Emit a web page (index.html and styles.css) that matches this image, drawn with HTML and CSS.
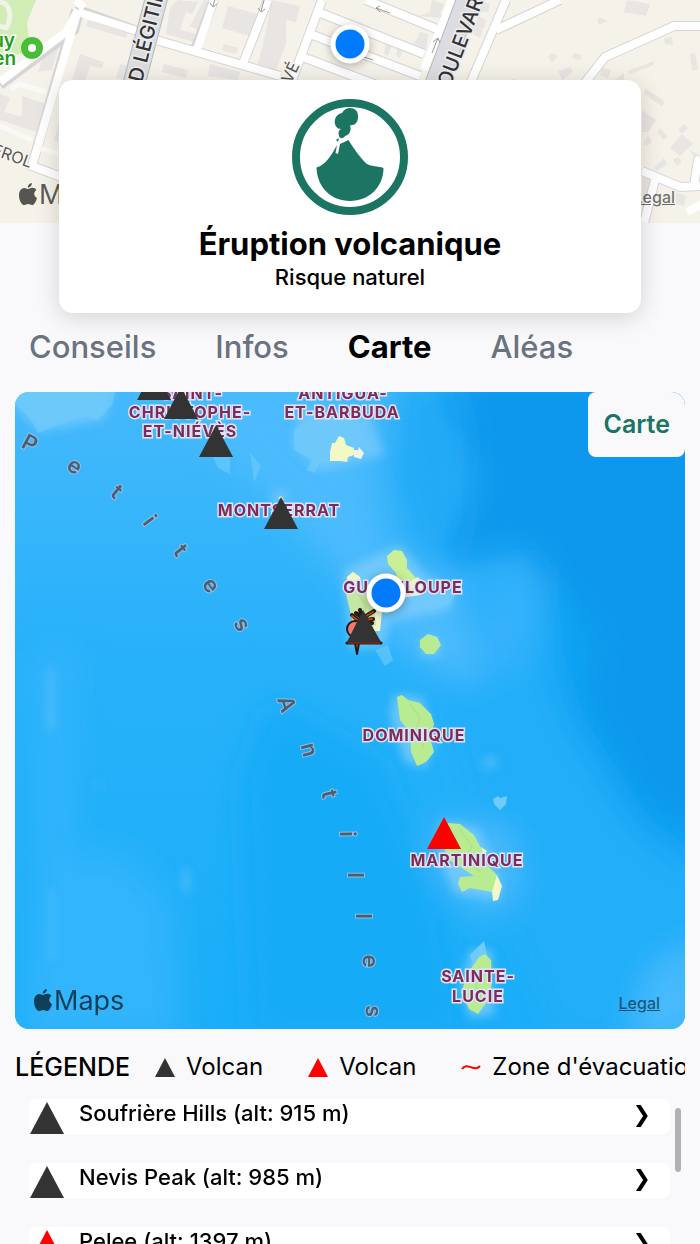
FILE: index.html
```html
<!DOCTYPE html>
<html lang="fr">
<head>
  <meta charset="UTF-8" />
  <meta name="viewport" content="width=device-width, initial-scale=1.0"/>
  <title>Éruption volcanique</title>
  <link rel="stylesheet" href="styles.css">
</head>
<body>

<svg class="defs" width="0" height="0">
  <symbol id="triangle" viewBox="0 0 34 32"><path d="M17 0L34 32H0z" fill="currentColor"/></symbol>
  <symbol id="apple" viewBox="0 0 18 22">
    <path d="M12.800 0c.3 2.500-1.700 4.700-4 4.700C8.600 2.400 10.500.3 12.800 0zM9.200 6c1.100 0 2.300-1.200 4.300-1.200 1.500 0 3.100.8 4 2.200-3.300 2-2.800 6.500.5 7.900C17 18.600 15.200 22 13.100 22c-1.500 0-2-.9-3.900-.9S6.800 22 5.300 22C2.500 22 0 17 0 12.400 0 7.800 2.400 4.900 5.300 4.900 7 4.900 8.200 6 9.200 6z" fill="currentColor"/>
  </symbol>
</svg>

<div class="app">
  <header class="top-map">
    <svg class="map-art" viewBox="0 0 700 223" preserveAspectRatio="xMidYMid slice">
      <rect width="700" height="223" fill="#f5f2e9"/>
      <path d="M0 0H36L27 22 30 52 0 58z" fill="#d1ecb5"/>
      <path d="M0 2C14 4 10 24 6 28L0 26" fill="none" stroke="#f0f3e6" stroke-width="5"/>

      <!-- buildings -->
      <g fill="#e8e5e2">
        <path d="M88 20L128 30 126 38 86 26zM80 54L104 62 102 68 90 66 84 84 72 80zM120 64L128 66 124 80 116 78zM164 64L188 70 186 78 162 72zM210 64L240 72 238 80 208 76z"/>
        <path d="M46 50L60 42 52 70 38 72zM0 94L10 98 4 112 26 118 24 128 0 120zM22 96L46 104 36 132 18 126 22 114z"/>
        <path d="M170 8L178 0 198 2 192 14 186 12 180 30 196 34 194 42 166 34zM204 0L212 2 198 30 190 26zM228 6L258 14 250 36 222 28z"/>
        <path d="M272 0L300 6 296 22 286 20 286 44 276 70 258 64 264 40zM224 44L238 48 236 54 222 50zM418 16L430 12 432 0 444 4 440 14 484 24 480 38 466 30 468 20zM420 32L428 34 426 50 414 44zM398 44L404 46 400 58 396 56zM386 42L392 44 388 56 384 54zM480 0L490 4 488 12 480 12zM478 16L486 20 484 28 476 26z"/>
        <path d="M627 0L650 4 646 16 624 12zM598 17L608 21 598 25zM548 57L552 53 558 56 552 62zM574 53L582 55 580 60 572 58zM558 71L570 67 573 72 562 80zM602 68L611 70 608 78 600 75zM628 71L654 61 654 65 630 74zM664 38L672 37 673 45 665 44zM690 54L695 53 698 69 692 71zM614 80L624 73 624 80z"/>
        <path d="M645 88L665 102 662 106 644 94zM642 110L656 120 648 132 642 132zM660 128L667 136 664 140 657 132zM670 148L682 134 693 144 680 156zM678 130L684 124 688 128 682 134zM644 142L648 136 652 142 646 146zM654 168L664 158 667 164 657 171zM673 160L678 157 682 162 677 166zM690 150L700 156 696 160zM642 176L656 181 648 214 642 206zM676 192L686 196 684 206 676 204z"/>
        <path d="M60 120L58 142 54 140zM56 186L60 180V192zM510 80L514 78 516 80z"/>
      </g>

      <!-- roads -->
      <g fill="none" stroke="#d6d5d5" stroke-width="10">
        <path d="M80 8L74 30 0 85M76 10L32 166 64 178M78 10L140 32M156 40L280 76M214 0L194 52M268 0L242 66M322 0L292 80M366 0L444 32M318 12L424 54M310 34L420 76M300 56L390 90M506 0L470 84M560 0L496 30M700 26L674 26 605 57 584 84M642 171L680 187 700 186M655 180L644 223M694 186L698 160 700 158"/>
      </g>
      <g fill="none" stroke="#fff" stroke-width="8">
        <path d="M76 0L84 8M78 10L66 32 0 82M78 10L32 166 64 178M78 12L140 32M156 40L280 76M214 0L196 52M268 0L242 66M322 0L292 80M366 0L444 32M318 12L424 54M310 34L420 76M300 56L390 90M452 0L424 70M506 0L470 84M560 0L496 30M700 26L674 26 605 57 584 84M642 171L680 187 700 186M655 180L644 223M694 186L698 160 700 158M687 212L702 204"/>
        <path d="M10 90L20 84 46 92M0 126L32 140M38 148L60 154" stroke-width="5" stroke="#faf9f6"/>
      </g>
      <path d="M157 -4L134 84M469 -4L436 84" fill="none" stroke="#b9bac0" stroke-width="23"/>
      <path d="M157 -4L134 84M469 -4L436 84" fill="none" stroke="#dcdde1" stroke-width="21"/>
      <g fill="none" stroke="#999" stroke-width="1">
        <path d="M217 -8L213 6M210 3L213 7 217 4M265 -3L261 11M258 8L261 12 265 9M390 13L376 8M380 6L376 8 380 12M432 53L438 38M433 42L438 38 440 43M373 60L364 57"/>
      </g>

      <g class="street">
        <text x="-9" y="154" transform="rotate(20 -9 154)">EROL</text>
        <text x="291" y="84" transform="rotate(-65 291 84)">VÉ</text>
        <text class="avenue" x="142" y="83" transform="rotate(-76 142 83)">D LÉGITIM</text>
        <text class="avenue" x="450" y="88" transform="rotate(-69 450 88)">OULEVARD</text>
      </g>
      <g class="park" text-anchor="end">
        <text x="15" y="47">uy</text>
        <text x="16" y="65">en</text>
      </g>
      <circle cx="32" cy="48" r="7.500" fill="#fff" stroke="#49bd37" stroke-width="7"/>
      <circle class="position" cx="350" cy="44" r="17"/>
    </svg>
    <div class="map-brand"><svg class="brand-icon"><use href="#apple"/></svg>Maps</div>
    <a class="legal" href="#">Legal</a>
  </header>

  <section class="risk-card">
    <svg class="risk-icon" viewBox="0 0 116 116">
      <circle cx="58" cy="58" r="54" fill="none" stroke="#1c7463" stroke-width="8"/>
      <path d="M24.500 68.500C34 66 40 55 45 46L43.500 54 46 55 48 45 56.500 41C62 50 70 61 75 65C79 67.500 86 67 91.500 69C91.500 88 77 102 58 102S25 88 24.500 68.500z" fill="#1c7463"/>
      <path d="M46 43L44 41 47 39M47 37C46 33 47 31 49 30C41 30 40 16 50 14C54 6 67 8 66 18C66 24 62 27 58 26C60 32 57 36 53 37C51 40 48 40 47 37z" fill="#1c7463"/>
    </svg>
    <h1>Éruption volcanique</h1>
    <p>Risque naturel</p>
  </section>

  <nav class="tabs">
    <button>Conseils</button>
    <button>Infos</button>
    <button class="active">Carte</button>
    <button>Aléas</button>
  </nav>

  <main>
    <div class="big-map">
      <svg class="map-art" viewBox="15 392 670 637" preserveAspectRatio="xMidYMid slice">
        <defs>
          <linearGradient id="sea" x1="0" y1="0" x2="0" y2="1">
            <stop offset="0" stop-color="#45b9fb"/>
            <stop offset=".4" stop-color="#28b1fa"/>
            <stop offset="1" stop-color="#1baef9"/>
          </linearGradient>
          <filter id="haze" x="-50%" y="-50%" width="200%" height="200%"><feGaussianBlur stdDeviation="16"/></filter>
          <filter id="shore" x="-50%" y="-50%" width="200%" height="200%"><feGaussianBlur stdDeviation="5"/></filter>
        </defs>
        <rect x="15" y="392" width="670" height="637" fill="url(#sea)"/>

        <!-- deep and shallow water -->
        <g filter="url(#haze)">
          <path d="M400 370L470 380 460 570 420 560 390 480z" fill="#20aaf7"/>
          <path d="M450 370H720V850L640 800 580 720 550 600 530 550 450 565 475 480z" fill="#0c98ed"/>
          <path d="M545 560L600 640 585 700 640 800 700 840V900L600 860 560 760z" fill="#0ca1f2"/>
          <path d="M270 700L240 780 250 1040 470 1040 440 900 380 760z" fill="#17abf7"/>
          <path d="M480 575L535 560 545 640 570 720 640 830 700 870V1040H560L480 850 430 660z" fill="#22aef9"/>
          <path d="M490 580L535 565 535 640 510 680 470 660z" fill="#36b2fb"/>
          <path d="M160 390L360 390 380 540 460 590 480 690 400 650 330 560z" fill="#4bbbfd"/>
          <path d="M40 860L120 850 170 900 180 1040 20 1040z" fill="#30b5fb"/>
          <path d="M40 650L70 650 70 860 40 860z" fill="#34b6fc"/>
          <path d="M440 820L510 830 520 890 480 920 430 860z" fill="#4bbbfd"/>
          <path d="M650 970L700 940V1040H630z" fill="#4abbfd"/>
        </g>
        <path d="M446 392L450 418 476 430 470 500 452 550 458 560 530 548 545 570" fill="none" stroke="#0798ed" stroke-width="6" opacity=".3" filter="url(#shore)"/>
        <g filter="url(#shore)" fill="#7accfb">
          <path d="M12 385H115L105 420 40 432 18 412zM300 410L370 415 385 455 320 472 292 445z" opacity=".7"/>
          <path d="M343 570L400 545 425 575 455 590 450 610 390 622 385 645 350 650zM420 638H440V656H420zM394 694L422 697 436 740 425 768 405 762 390 715zM440 820L478 828 500 880 500 900 455 894 440 860zM470 950L492 950 494 1015 470 1018 460 990z" opacity=".8"/>
          <path d="M48 670L52 668 53 725 48 735zM50 890L53 888V960H50zM182 870L188 868 190 895 184 890zM94 785L100 782 100 790zM272 490H288V510H272zM490 755L500 765 480 768z" opacity=".6"/>
        </g>
        <g fill="#6fcbfa">
          <path d="M15 392H115L112 405 98 420 84 417 66 422 50 428 38 433 34 425 26 414 16 406zM294 430L310 418 355 410 362 440 350 462 320 462 315 473 306 470 312 460 294 450z" opacity=".7"/>
          <path d="M213 457H230V474L218 468zM250 452L261 466 254 482 252 465zM415 606L460 588 450 604 430 611zM375 650L388 645 393 660 385 666z" opacity=".6"/>
          <path d="M493 799L498 796 500 798 507 796 506 804 500 810 494 804zM470 955L484 941 488 960 474 970z"/>
        </g>

        <!-- islands -->
        <path d="M330 452L332 443 335 443 339 436 344 438 346 445 354 448 354 455 348 457 347 462 340 461 330 461z" fill="#f1fac5"/>
        <path d="M354 450H358L359 447 364 453 361 459 354 457z" fill="#f3f3e8"/>
        <path d="M387 556L394 550 402 551 407 560 407 568 416 578 414 590 405 598 398 584 396 573 388 564z" fill="#c9f096"/>
        <path d="M392 578L405 584 418 577 424 584 420 595 400 598zM372 603L382 612 380 631 370 631z" fill="#f0f3cb"/>
        <path d="M347 577L353 572 360 577 362 590 373 600 376 625 363 632 352 619 346 594z" fill="#c6e6a6"/>
        <path d="M347 577L353 572 360 577 362 588 348 594z" fill="#eef8c4"/>
        <path d="M420 640L428 634 437 637 441 645 434 654 426 654 420 647z" fill="#b9ec92"/>
        <path d="M397 697L402 695 408 700 420 703 431 714 434 724 430 738 434 752 426 762 417 766 411 752 410 732 400 720z" fill="#b9ec92"/>
        <path d="M448 823L460 824 474 835 482 850 486 864 497 875 498 888 492 892 470 888 462 892 458 884 460 877 474 876 462 868 446 858 444 838z" fill="#b9ec92"/>
        <path d="M481 847L487 851 484 856zM497 875L502 886 498 900 493 901 492 892zM190 400L192 405 189 405zM278 498L281 496 284 500z" fill="#f1fac5"/>
        <path d="M479 957L485 954 491 960 492 980 490 998 478 1014 469 1009 461 992 470 970z" fill="#b9ec92"/>
        <path d="M410 704L420 718 416 732 424 748M460 830L472 846 466 856 480 872M356 590L366 606 362 620M480 966L476 986 482 1000" fill="none" stroke="#a3da81" stroke-width="2" opacity=".4"/>

        <g class="country" text-anchor="middle">
          <text x="192" y="399">SAINT-</text>
          <text x="190" y="418">CHRISTOPHE-</text>
          <text x="190" y="437">ET-NIÉVÈS</text>
          <text x="343" y="399">ANTIGUA-</text>
          <text x="342" y="418">ET-BARBUDA</text>
          <text x="279" y="516">MONTSERRAT</text>
          <text x="403" y="593">GUADELOUPE</text>
          <text x="414" y="741">DOMINIQUE</text>
          <text x="467" y="866">MARTINIQUE</text>
          <text x="478" y="982">SAINTE-</text>
          <text x="478" y="1002">LUCIE</text>
        </g>

        <!-- Petites Antilles, one letter at a time along the arc -->
        <g class="sea-name" text-anchor="middle">
          <text transform="translate(30 443) rotate(28)" y="8">P</text>
          <text transform="translate(74 467) rotate(33)" y="6">e</text>
          <text transform="translate(117 491) rotate(40)" y="8">t</text>
          <text transform="translate(150 520) rotate(53)" y="8">i</text>
          <text transform="translate(181 550) rotate(52)" y="8">t</text>
          <text transform="translate(210 586) rotate(54)" y="6">e</text>
          <text transform="translate(241 625) rotate(60)" y="6">s</text>
          <text transform="translate(287 704) rotate(72)" y="8">A</text>
          <text transform="translate(308 750) rotate(76)" y="6">n</text>
          <text transform="translate(330 794) rotate(78)" y="8">t</text>
          <text transform="translate(348 834) rotate(89)" y="8">i</text>
          <text transform="translate(356 875) rotate(90)" y="8">l</text>
          <text transform="translate(364 916) rotate(90)" y="8">l</text>
          <text transform="translate(369 961) rotate(91)" y="6">e</text>
          <text transform="translate(372 1011) rotate(93)" y="6">s</text>
        </g>

        <!-- volcanoes -->
        <g color="#333">
          <use href="#triangle" x="137" y="368" width="34" height="32"/>
          <use href="#triangle" x="164" y="387" width="34" height="32"/>
          <use href="#triangle" x="199" y="425" width="34" height="32"/>
          <use href="#triangle" x="264" y="497" width="34" height="32"/>
        </g>
        <use href="#triangle" x="427" y="817" width="34" height="32" color="#f00"/>
        <g stroke="#251914" stroke-width="2" stroke-linejoin="round" stroke-linecap="round">
          <path d="M360 622L352 615M362 618L356 613M362 616L360 610M366 616L374 611M366 620L373 619M367 624L372 623" stroke-width="4"/>
          <path d="M360 622L352 616M366 616L373 612M366 620L372 619" stroke="#b14412" stroke-width="2"/>
          <circle cx="355" cy="629" r="8" fill="#f57870"/>
          <path d="M355 643H359L357 654z" fill="#e75a42"/>
          <path d="M347 643H381" stroke-width="3"/>
          <path d="M348 643H380" stroke="#a83a18" stroke-width="1"/>
        </g>
        <path d="M363 610L381 642H347z" fill="#333"/>
        <circle class="position" cx="386" cy="593" r="17"/>
      </svg>
      <button class="map-type">Carte</button>
      <div class="map-brand"><svg class="brand-icon"><use href="#apple"/></svg>Maps</div>
      <a class="legal" href="#">Legal</a>
    </div>

    <div class="legend">
      <strong>LÉGENDE</strong>
      <span class="legend-item"><svg class="legend-icon"><use href="#triangle"/></svg>Volcan</span>
      <span class="legend-item"><svg class="legend-icon red"><use href="#triangle"/></svg>Volcan</span>
      <span class="legend-item"><svg class="legend-icon red" viewBox="0 0 20 19"><path d="M1 11C6 3 13 15 19 8" fill="none" stroke="currentColor" stroke-width="2"/></svg>Zone d'évacuation</span>
    </div>

    <div class="volcano-list">
      <button class="volcano">
        <svg class="volcano-icon"><use href="#triangle"/></svg>
        <span class="volcano-name">Soufrière Hills (alt: 915 m)</span>
        <span class="chevron">❯</span>
      </button>
      <button class="volcano">
        <svg class="volcano-icon"><use href="#triangle"/></svg>
        <span class="volcano-name">Nevis Peak (alt: 985 m)</span>
        <span class="chevron">❯</span>
      </button>
      <button class="volcano">
        <svg class="volcano-icon red"><use href="#triangle"/></svg>
        <span class="volcano-name">Pelee (alt: 1397 m)</span>
        <span class="chevron">❯</span>
      </button>
      <div class="scroll-thumb"></div>
    </div>
  </main>
</div>

</body>
</html>
```
FILE: styles.css
```css
* {
  box-sizing: border-box;
}

body {
  margin: 0;
  font-family: Inter, "Liberation Sans", sans-serif;
  background-color: #f9f9fb;
  color: #000;
}

button {
  border: none;
  background: none;
  padding: 0;
  font-family: inherit;
  color: inherit;
  cursor: pointer;
}

.defs {
  position: absolute;
}

.app {
  display: flex;
  flex-direction: column;
  height: 100vh;
  overflow: hidden;
}

/* maps */
.top-map {
  position: relative;
  flex: none;
  height: 223px;
}

.map-art {
  display: block;
  width: 100%;
  height: 100%;
}

.position {
  fill: #007aff;
  stroke: #fff;
  stroke-width: 5px;
  filter: drop-shadow(0 2px 5px rgba(0, 0, 0, 0.3));
}

.street {
  font-size: 16px;
  fill: #555;
  stroke: #f8f6f0;
  stroke-width: 3px;
  paint-order: stroke;
}

.avenue {
  font-size: 20px;
  font-weight: 500;
  fill: #333;
  stroke: #ececee;
}

.park {
  font-size: 19px;
  font-weight: 600;
  fill: #259d1c;
  stroke: #fff;
  stroke-width: 3px;
  paint-order: stroke;
}

.country {
  font-size: 16px;
  font-weight: 700;
  letter-spacing: 1px;
  fill: #7d2c58;
  stroke: #dde3fa;
  stroke-width: 3px;
  paint-order: stroke;
}

.sea-name {
  font-size: 22px;
  font-weight: 600;
  fill: #4c5e71;
  stroke: #8cbfe7;
  stroke-width: 2px;
  paint-order: stroke;
}

.map-brand {
  position: absolute;
  left: 19px;
  bottom: 10px;
  display: flex;
  align-items: center;
  gap: 2px;
  font-size: 27px;
  line-height: 36px;
  color: rgba(0, 0, 0, 0.65);
}

.brand-icon {
  width: 18px;
  height: 22px;
  margin-bottom: 2px;
}

.legal {
  position: absolute;
  right: 25px;
  bottom: 16px;
  font-size: 16px;
  line-height: 20px;
  font-weight: 500;
  color: rgba(0, 0, 0, 0.55);
}

/* header card */
.risk-card {
  position: relative;
  flex: none;
  display: flex;
  flex-direction: column;
  align-items: center;
  margin: -143px 59px 0;
  padding: 19px 16px 20px;
  background: #fff;
  border-radius: 14px;
  box-shadow: 0 4px 24px rgba(0, 0, 0, 0.16);
}

.risk-icon {
  width: 116px;
  height: 116px;
}

.risk-card h1 {
  margin: 9px 0 0;
  font-size: 31px;
  line-height: 40px;
  font-weight: 700;
}

.risk-card p {
  margin: 0 0 3px;
  font-size: 22px;
  line-height: 26px;
  font-weight: 500;
}

.tabs {
  flex: none;
  display: flex;
  gap: 59px;
  margin-top: 14px;
  padding: 0 29px;
}

.tabs button {
  font-size: 31px;
  line-height: 40px;
  font-weight: 500;
  color: #6b7280;
}

.tabs .active {
  font-weight: 700;
  color: #000;
}

main {
  flex: 1;
  min-height: 0;
  display: flex;
  flex-direction: column;
  padding: 25px 15px 0;
}

.big-map {
  position: relative;
  flex: none;
  height: 637px;
  border-radius: 14px;
  overflow: hidden;
}

.map-type {
  position: absolute;
  top: 0;
  right: 0;
  padding: 15px;
  background: #f9f9fb;
  border-radius: 8px 0 8px 8px;
  font-size: 25px;
  line-height: 35px;
  font-weight: 600;
  color: #1c7463;
}

/* legend */
.legend {
  flex: none;
  display: flex;
  align-items: center;
  margin-top: 20px;
  font-size: 24px;
  line-height: 36px;
  white-space: nowrap;
  overflow: hidden;
}

.legend strong {
  font-size: 25px;
  font-weight: 500;
  margin-right: 25px;
}

.legend-item {
  display: flex;
  align-items: center;
  gap: 11px;
  margin-right: 45px;
}

.legend-icon {
  flex: none;
  width: 20px;
  height: 19px;
  color: #333;
}

.red {
  color: #f00;
}

/* list */
.volcano-list {
  position: relative;
  flex: 1;
  min-height: 0;
  display: flex;
  flex-direction: column;
  gap: 29px;
  margin-top: 14px;
  padding: 0 15px 0 14px;
  overflow: hidden;
}

.volcano {
  flex: none;
  display: flex;
  align-items: flex-start;
  height: 35px;
  padding: 0 19px 0 1px;
  background: #fff;
  border-radius: 8px;
  text-align: left;
}

.volcano-icon {
  width: 34px;
  height: 32px;
  margin-top: 3px;
  color: #333;
}

.volcano-icon.red {
  color: #f00;
}

.volcano-name {
  flex: 1;
  margin-left: 15px;
  font-size: 22px;
  line-height: 28px;
  font-weight: 500;
}

.chevron {
  font-family: "DejaVu Sans", sans-serif;
  font-size: 22px;
  line-height: 32px;
  font-weight: 700;
}

.scroll-thumb {
  position: absolute;
  top: 9px;
  right: 4px;
  width: 6px;
  height: 64px;
  border-radius: 3px;
  background: #b1b1b3;
}
```
